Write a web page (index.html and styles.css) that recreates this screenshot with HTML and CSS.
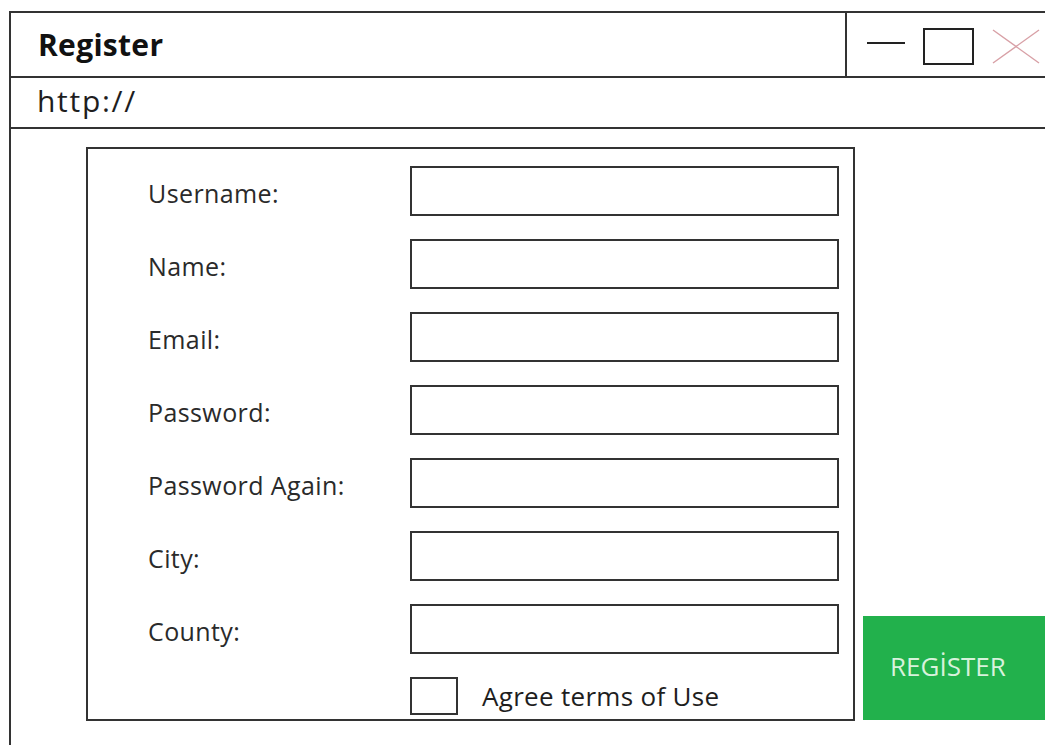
FILE: index.html
```html
<!DOCTYPE html>
<html lang="en">
<head>
<meta charset="utf-8">
<title>Register</title>
<link rel="stylesheet" href="styles.css">
</head>
<body>
<div class="window">
  <header class="titlebar">
    <div class="title">Register</div>
    <div class="controls">
      <svg class="ctl" width="200" height="64" viewBox="0 0 200 64" aria-hidden="true">
        <line x1="20" y1="30" x2="58" y2="30" stroke="#222" stroke-width="2"/>
        <rect x="77" y="16" width="49" height="35" fill="none" stroke="#222" stroke-width="2"/>
        <line x1="146" y1="17" x2="192" y2="50" stroke="#d8a0a6" stroke-width="1.4"/>
        <line x1="192" y1="17" x2="146" y2="50" stroke="#d8a0a6" stroke-width="1.4"/>
      </svg>
    </div>
  </header>
  <div class="urlbar">http://</div>
  <main class="content">
    <form class="form-box">
      <div class="row"><label class="label">Username:</label><span class="field"></span></div>
      <div class="row"><label class="label">Name:</label><span class="field"></span></div>
      <div class="row"><label class="label">Email:</label><span class="field"></span></div>
      <div class="row"><label class="label">Password:</label><span class="field"></span></div>
      <div class="row"><label class="label">Password Again:</label><span class="field"></span></div>
      <div class="row"><label class="label">City:</label><span class="field"></span></div>
      <div class="row"><label class="label">County:</label><span class="field"></span></div>
      <div class="agree"><span class="check"></span><span class="agree-text">Agree terms of Use</span></div>
    </form>
    <div class="register-btn">REGİSTER</div>
  </main>
</div>
</body>
</html>
```
FILE: styles.css
```css
html, body {
  margin: 0;
  padding: 0;
  background: #fff;
  overflow: hidden;
}

body {
  width: 1045px;
  height: 745px;
  font-family: "Open Sans", "Noto Sans", sans-serif;
  color: #222;
}

.window {
  margin: 11px 0 0 9px;
  width: 1100px;
  height: 800px;
  border-left: 2px solid #333;
  border-top: 2px solid #333;
}

.titlebar {
  display: flex;
  height: 63px;
  border-bottom: 2px solid #333;
}

.title {
  width: 834px;
  padding-left: 27px;
  box-sizing: border-box;
  display: flex;
  align-items: center;
  font-weight: 700;
  font-size: 30px;
  letter-spacing: 0.3px;
  color: #111;
}

.controls {
  flex: 1;
  border-left: 2px solid #333;
}

.ctl {
  display: block;
}

.urlbar {
  height: 49px;
  border-bottom: 2px solid #333;
  padding-left: 26px;
  font-size: 30px;
  letter-spacing: 1.7px;
  line-height: 46px;
  color: #1e1e1e;
}

.content {
  display: flex;
  align-items: flex-end;
  padding: 18px 0 0 75px;
}

.form-box {
  width: 769px;
  height: 574px;
  box-sizing: border-box;
  border: 2px solid #333;
  padding: 17px 0 0 60px;
  margin: 0;
  display: flex;
  flex-direction: column;
  gap: 23px;
}

.row {
  display: flex;
  align-items: center;
  height: 50px;
}

.label {
  width: 262px;
  font-size: 25px;
  letter-spacing: 0.4px;
  font-weight: 500;
  color: #2a2a2a;
  padding-top: 3px;
}

.field {
  width: 429px;
  height: 50px;
  box-sizing: border-box;
  border: 2px solid #333;
}

.agree {
  display: flex;
  align-items: center;
  margin-left: 262px;
}

.check {
  width: 48px;
  height: 38px;
  box-sizing: border-box;
  border: 2px solid #333;
}

.agree-text {
  margin-left: 24px;
  font-size: 26px;
  letter-spacing: 0.3px;
  font-weight: 500;
  color: #1e1e1e;
}

.register-btn {
  margin-left: 8px;
  margin-bottom: 1px;
  width: 200px;
  height: 104px;
  background: #22b14c;
  color: #d8f2dc;
  font-size: 26px;
  display: flex;
  align-items: center;
  padding-left: 27px;
  padding-bottom: 4px;
  box-sizing: border-box;
}
```
